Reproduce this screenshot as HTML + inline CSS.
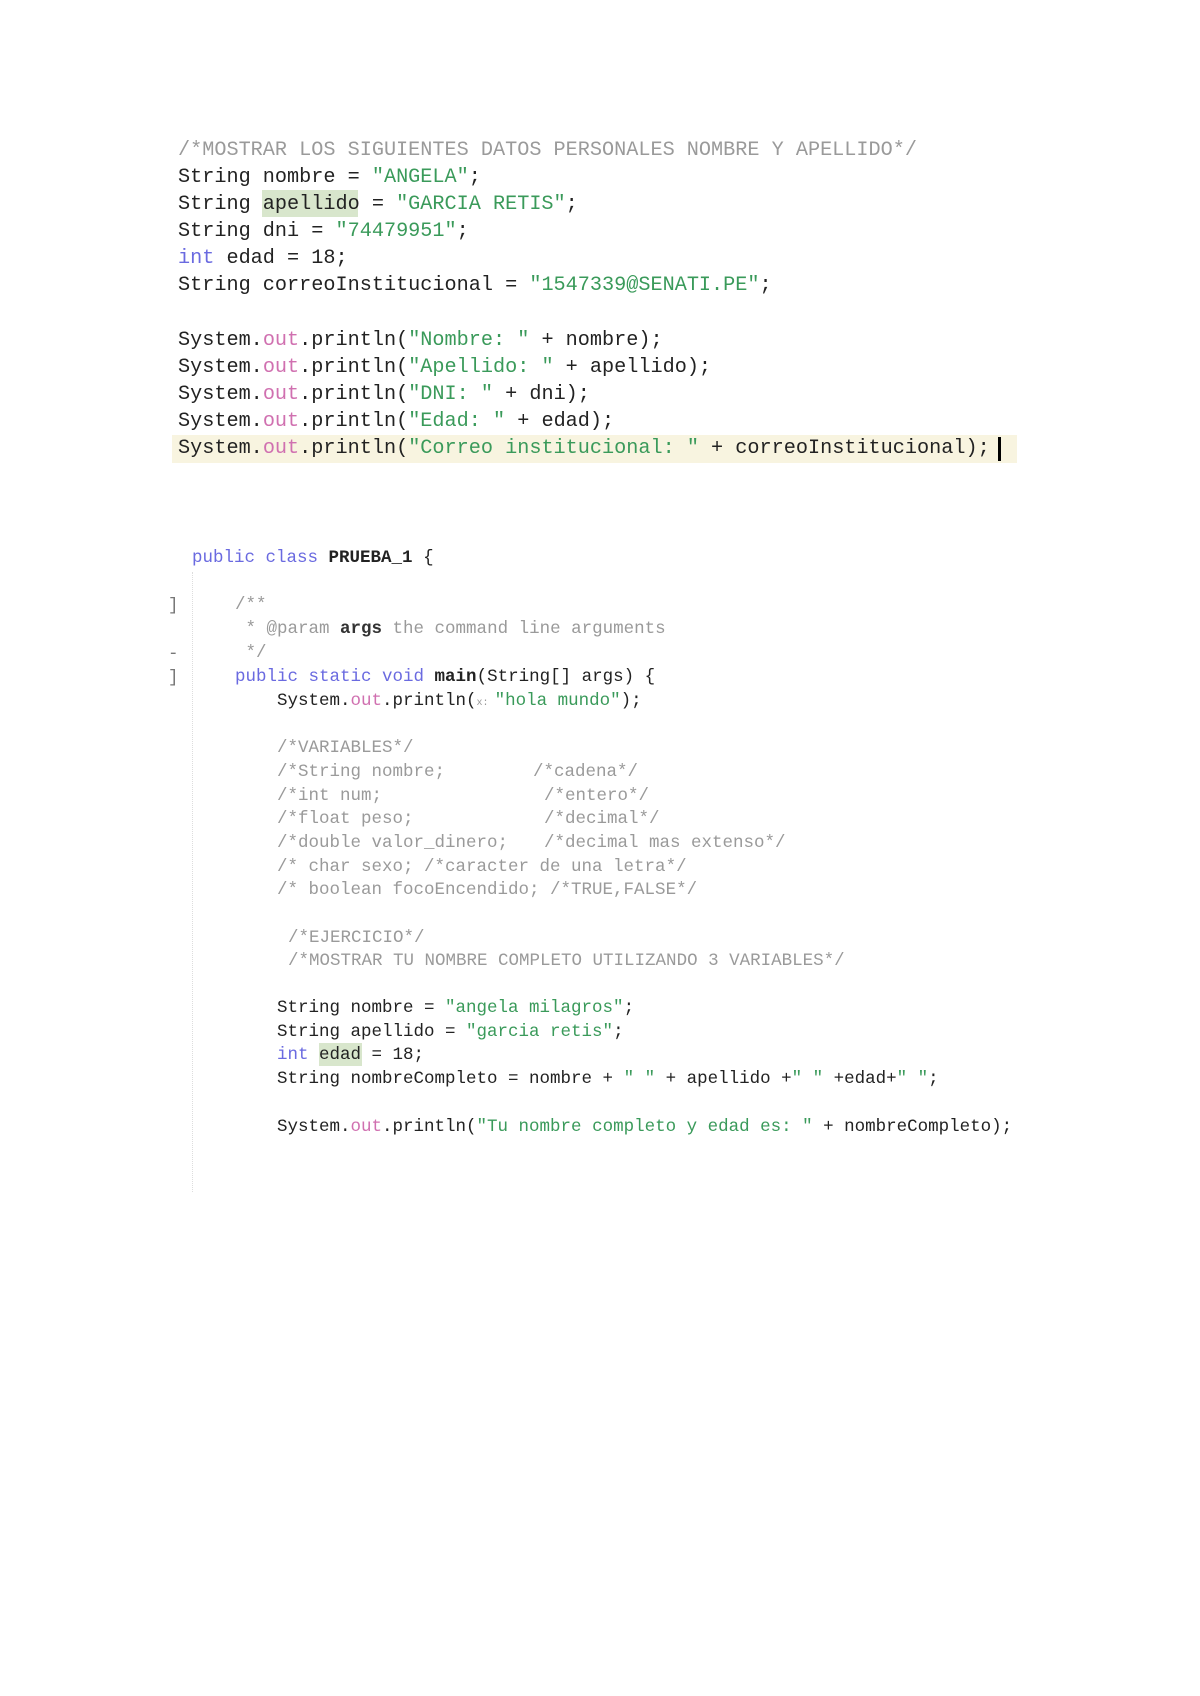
<!DOCTYPE html>
<html><head><meta charset="utf-8"><style>
html,body{margin:0;padding:0;background:#fff;}
body{width:1200px;height:1696px;position:relative;overflow:hidden;}
.l{position:absolute;white-space:pre;font-family:"Liberation Mono",monospace;color:#222;}
.a{font-size:20.2px;line-height:27px;}
.b{font-size:17.5px;line-height:24px;}
.c{color:#9a9a9a;}
.s{color:#3a9a5a;}
.k{color:#6a6ae0;}
.o{color:#d070b0;}
.bd{font-weight:bold;}
</style></head><body>
<div style="position:absolute;left:172px;top:435px;width:845px;height:28px;background:#f8f4e0"></div>
<div style="position:absolute;left:262px;top:190px;width:96px;height:27px;background:#d8e6cc"></div>
<div style="position:absolute;left:319px;top:1043px;width:43px;height:23px;background:#d8e6cc"></div>
<div style="position:absolute;left:998px;top:437px;width:3px;height:24px;background:#000"></div>

<div class="l a c" style="left:178px;top:137px">/*MOSTRAR LOS SIGUIENTES DATOS PERSONALES NOMBRE Y APELLIDO*/</div>
<div class="l a" style="left:178px;top:164px">String nombre = <span class="s">"ANGELA"</span>;</div>
<div class="l a" style="left:178px;top:191px">String apellido = <span class="s">"GARCIA RETIS"</span>;</div>
<div class="l a" style="left:178px;top:218px">String dni = <span class="s">"74479951"</span>;</div>
<div class="l a" style="left:178px;top:245px"><span class="k">int</span> edad = 18;</div>
<div class="l a" style="left:178px;top:272px">String correoInstitucional = <span class="s">"1547339@SENATI.PE"</span>;</div>
<div class="l a" style="left:178px;top:327px">System.<span class="o">out</span>.println(<span class="s">"Nombre: "</span> + nombre);</div>
<div class="l a" style="left:178px;top:354px">System.<span class="o">out</span>.println(<span class="s">"Apellido: "</span> + apellido);</div>
<div class="l a" style="left:178px;top:381px">System.<span class="o">out</span>.println(<span class="s">"DNI: "</span> + dni);</div>
<div class="l a" style="left:178px;top:408px">System.<span class="o">out</span>.println(<span class="s">"Edad: "</span> + edad);</div>
<div class="l a" style="left:178px;top:435px">System.<span class="o">out</span>.println(<span class="s">"Correo institucional: "</span> + correoInstitucional);</div>

<div style="position:absolute;left:192px;top:572px;width:0;height:620px;border-left:1px dotted #ddd"></div>
<div class="l b" style="left:168px;top:594px;color:#777">]</div>
<div class="l b" style="left:168px;top:642px;color:#777">-</div>
<div class="l b" style="left:168px;top:666px;color:#777">]</div>

<div class="l b" style="left:192px;top:546px"><span class="k">public class</span> <span class="bd">PRUEBA_1</span> {</div>
<div class="l b c" style="left:235px;top:593px">/**</div>
<div class="l b c" style="left:235px;top:617px"> * @param <span class="bd" style="color:#333">args</span> the command line arguments</div>
<div class="l b c" style="left:235px;top:641px"> */</div>
<div class="l b" style="left:235px;top:665px"><span class="k">public static void</span> <span class="bd">main</span>(String[] args) {</div>
<div class="l b" style="left:277px;top:689px">System.<span class="o">out</span>.println(<span class="c" style="font-size:10px">x: </span><span class="s">"hola mundo"</span>);</div>
<div class="l b c" style="left:277px;top:736px">/*VARIABLES*/</div>
<div class="l b c" style="left:277px;top:760px">/*String nombre;</div><div class="l b c" style="left:533px;top:760px">/*cadena*/</div>
<div class="l b c" style="left:277px;top:784px">/*int num;</div><div class="l b c" style="left:544px;top:784px">/*entero*/</div>
<div class="l b c" style="left:277px;top:807px">/*float peso;</div><div class="l b c" style="left:544px;top:807px">/*decimal*/</div>
<div class="l b c" style="left:277px;top:831px">/*double valor_dinero;</div><div class="l b c" style="left:544px;top:831px">/*decimal mas extenso*/</div>
<div class="l b c" style="left:277px;top:855px">/* char sexo; /*caracter de una letra*/</div>
<div class="l b c" style="left:277px;top:878px">/* boolean focoEncendido; /*TRUE,FALSE*/</div>
<div class="l b c" style="left:288px;top:926px">/*EJERCICIO*/</div>
<div class="l b c" style="left:288px;top:949px">/*MOSTRAR TU NOMBRE COMPLETO UTILIZANDO 3 VARIABLES*/</div>
<div class="l b" style="left:277px;top:996px">String nombre = <span class="s">"angela milagros"</span>;</div>
<div class="l b" style="left:277px;top:1020px">String apellido = <span class="s">"garcia retis"</span>;</div>
<div class="l b" style="left:277px;top:1043px"><span class="k">int</span> edad = 18;</div>
<div class="l b" style="left:277px;top:1067px">String nombreCompleto = nombre + <span class="s">" "</span> + apellido +<span class="s">" "</span> +edad+<span class="s">" "</span>;</div>
<div class="l b" style="left:277px;top:1115px">System.<span class="o">out</span>.println(<span class="s">"Tu nombre completo y edad es: "</span> + nombreCompleto);</div>
</body></html>
